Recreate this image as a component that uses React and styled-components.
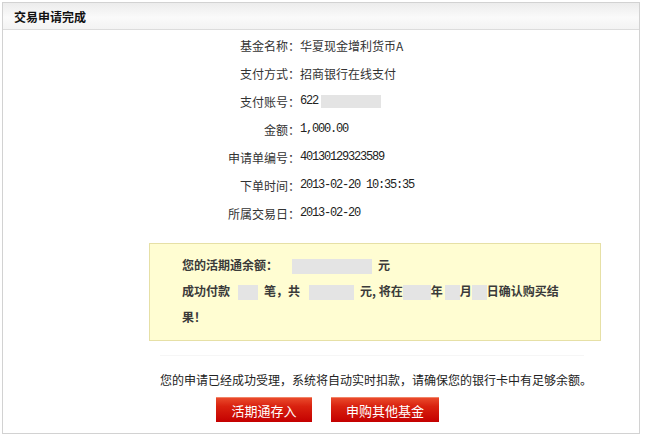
import React from "react";
import styled, { createGlobalStyle } from "styled-components";

const Global = createGlobalStyle`
  html, body { margin: 0; padding: 0; background: #fff; }
  body { font-family: "Noto Sans CJK SC", "Liberation Sans", sans-serif; font-size: 12px; color: #333; }
`;

const Panel = styled.div`
  margin: 2px 0 0 2px;
  width: 636px;
  height: 430px;
  border: 1px solid #d2d2d2;
  background: #fff;
`;

const Header = styled.div`
  height: 26px;
  border-bottom: 1px solid #dcdcdc;
  background: linear-gradient(#ececec 0%, #fafafa 55%, #f3f3f3 100%);
  display: flex;
  align-items: center;
  padding-left: 11px;
  font-weight: bold;
  font-size: 12px;
  color: #111;
`;

const Rows = styled.div`
  padding-top: 1px;
  display: flex;
  flex-direction: column;
`;

const Row = styled.div`
  height: 28px;
  display: flex;
  align-items: center;
`;

const Label = styled.div`
  width: 297px;
  text-align: right;
  color: #333;
`;

const Value = styled.div`
  display: flex;
  align-items: center;
  color: #333;
`;

const Num = styled.span`
  font-family: "Liberation Mono", monospace;
  font-size: 12px;
  letter-spacing: -1.2px;
  color: #222;
`;

const Mask = styled.span`
  display: inline-block;
  width: ${(p) => p.$w}px;
  height: ${(p) => p.$h || 15}px;
  margin-left: ${(p) => p.$ml || 0}px;
  margin-right: ${(p) => p.$mr || 0}px;
  background: #e4e4e4;
  vertical-align: middle;
`;

const Notice = styled.div`
  margin: 16px 0 0 146px;
  width: 450px;
  height: 96px;
  border: 1px solid #e6e0a6;
  background: #fffdd2;
`;

const NoticeText = styled.div`
  padding: 8px 0 0 32px;
  line-height: 26px;
  font-weight: bold;
  color: #3a3a3a;
  white-space: nowrap;
`;

const Divider = styled.div`
  margin: 14px 0 0 157px;
  width: 424px;
  border-top: 1px solid #f6f6f6;
`;

const Message = styled.div`
  margin-left: 157px;
  padding-top: 14px;
  line-height: 20px;
  color: #222;
  white-space: nowrap;
`;

const Buttons = styled.div`
  display: flex;
  gap: 19px;
  margin: 7px 0 0 213px;
`;

const RedButton = styled.button`
  width: ${(p) => p.$w}px;
  height: 25px;
  padding: 0;
  border: none;
  border-top: 1px solid #f28366;
  background: linear-gradient(#e9492b 0%, #d9220f 35%, #c40000 100%);
  color: #fff;
  font-family: "Noto Sans CJK SC", sans-serif;
  font-size: 13px;
  cursor: pointer;
  display: flex;
  align-items: center;
  justify-content: center;
`;

export default function App() {
  return (
    <>
      <Global />
      <Panel>
        <Header>交易申请完成</Header>
        <Rows>
          <Row>
            <Label>基金名称：</Label>
            <Value>华夏现金增利货币A</Value>
          </Row>
          <Row>
            <Label>支付方式：</Label>
            <Value>招商银行在线支付</Value>
          </Row>
          <Row>
            <Label>支付账号：</Label>
            <Value>
              <Num>622</Num>
              <Mask $w={60} $h={13} $ml={3} />
            </Value>
          </Row>
          <Row>
            <Label>金额：</Label>
            <Value>
              <Num>1,000.00</Num>
            </Value>
          </Row>
          <Row>
            <Label>申请单编号：</Label>
            <Value>
              <Num>40130129323589</Num>
            </Value>
          </Row>
          <Row>
            <Label>下单时间：</Label>
            <Value>
              <Num>2013-02-20 10:35:35</Num>
            </Value>
          </Row>
          <Row>
            <Label>所属交易日：</Label>
            <Value>
              <Num>2013-02-20</Num>
            </Value>
          </Row>
        </Rows>
        <Notice>
          <NoticeText>
            您的活期通余额：<Mask $w={80} $ml={14} $mr={6} />元
            <br />
            成功付款<Mask $w={20} $ml={8} $mr={6} />笔，共<Mask $w={45} $ml={9} $mr={6} />元, 将在
            <Mask $w={28} />年<Mask $w={15} $ml={2} />月<Mask $w={15} />日确认购买结
            <br />
            果！
          </NoticeText>
        </Notice>
        <Divider />
        <Message>您的申请已经成功受理，系统将自动实时扣款，请确保您的银行卡中有足够余额。</Message>
        <Buttons>
          <RedButton $w={96}>活期通存入</RedButton>
          <RedButton $w={108}>申购其他基金</RedButton>
        </Buttons>
      </Panel>
    </>
  );
}
